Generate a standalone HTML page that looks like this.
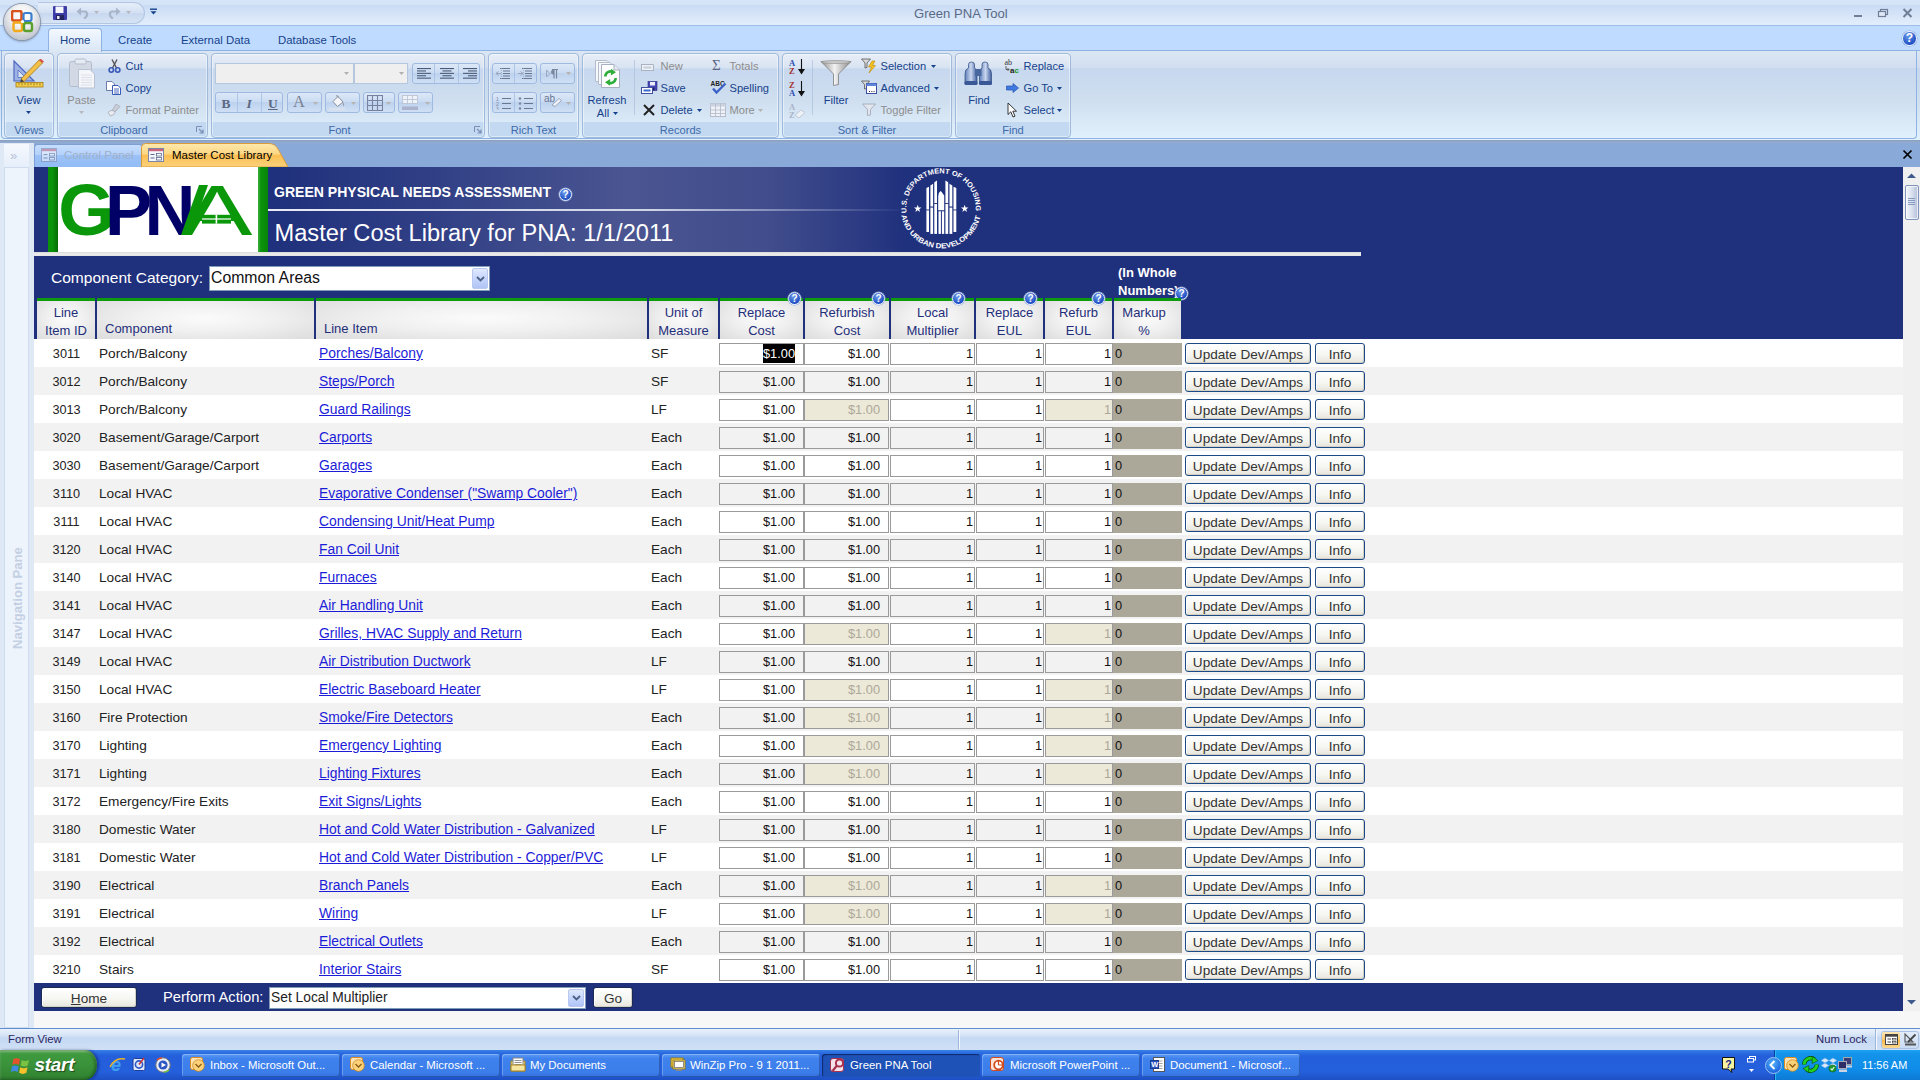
<!DOCTYPE html><html><head><meta charset="utf-8"><title>Green PNA Tool</title><style>*{box-sizing:border-box;margin:0;padding:0}
html,body{width:1920px;height:1080px;overflow:hidden;background:#fff}
body{position:relative;font-family:"Liberation Sans",sans-serif;font-size:11.3px;color:#15428b}
.a{position:absolute}
.t{position:absolute;white-space:nowrap;line-height:1}
#title{left:0;top:0;width:1920px;height:26px;background:linear-gradient(#d6e4f7 0,#d6e4f7 5px,#c9dbf5 5px,#e3eefb 25px,#9dbde8 25px,#9dbde8 26px)}
#tabrow{left:0;top:26px;width:1920px;height:25px;background:#bfdbff;border-bottom:1px solid #8db2e3}
#ribbon{left:0;top:51px;width:1920px;height:89px;background:linear-gradient(#dbe6f4 0,#d2deef 17px,#c7d7ee 17px,#cfdff0 50px,#e1f1fc 88px)}
.grp{position:absolute;top:53px;height:85px;border:1px solid #9fbadb;border-radius:4px;background:linear-gradient(rgba(255,255,255,.35) 0,rgba(255,255,255,.12) 15px,rgba(255,255,255,0) 15px,rgba(255,255,255,0) 68px,#c2d9f1 68px,#c2d9f1 83px);box-shadow:inset 0 0 0 1px rgba(255,255,255,.45)}
.gl{position:absolute;top:124.5px;font-size:11.1px;color:#3e6aaa;text-align:center;white-space:nowrap;line-height:1}
.rt{position:absolute;white-space:nowrap;line-height:1;font-size:11.1px;color:#15428b}
.dis{color:#8d8d8d}
.bg{position:absolute;border:1px solid #9ebae1;border-radius:3px;background:linear-gradient(#dce8f7,#c9dbf2 50%,#bdd2ee 50%,#cfe0f5)}
.sep{position:absolute;width:1px;background:#9ebae1;opacity:.7}
.combo{position:absolute;border:1px solid #b5c7de;background:#efefef}
#docbar{left:0;top:140px;width:1920px;height:27px;background:linear-gradient(#8a9fbf 0,#93aace 2px,#89aad8 4px,#89aad8 27px)}
#nav{left:0;top:143px;width:34px;height:885px;background:#dfe9f6}
#form{left:34px;top:167px;width:1869px;height:844px;background:#fff;overflow:hidden}
.navy{background:#1f307c}
.hc{position:absolute;top:131px;height:41px;border-top:3px solid #0e9a0e;background:radial-gradient(ellipse at 50% 45%,#fbfbfb 0,#f0f0f0 45%,#dcdcdc 100%);color:#1f2f7a;font-size:13px;line-height:18px;text-align:center;white-space:nowrap}
.hd{position:absolute;top:134px;height:38px;width:2px;background:#1f307c}
.row{position:absolute;left:0;width:1869px;height:28px;font-size:13.65px;color:#222;line-height:29px;white-space:nowrap}
.row.alt{background:#f2f2f2}
.row span,.row a{position:absolute;top:0;height:28px}
.row a{color:#1c1cd8;text-decoration:underline;font-size:13.85px}
.f{position:absolute;top:4px;height:22px;border:1px solid #9a9a9a;line-height:20px;text-align:right;font-size:12.8px;color:#111}
.f.d{background:#ece9d8;color:#aca899}
.mk{position:absolute;top:4px;height:22px;left:1079px;width:69px;background:#aca899;line-height:21px;padding-left:2px;font-size:12.8px;color:#111}
.btn{position:absolute;top:4px;height:21px;border:1px solid #1c4a86;border-radius:3px;background:linear-gradient(#fff,#f5f5f1 60%,#e6e4db);box-shadow:inset -1px -1px 0 #d2d0c4, inset 1px 1px 0 #fff;line-height:21px;text-align:center;font-size:13.6px;color:#333}
.q{position:absolute;width:13px;height:13px;border-radius:50%;background:radial-gradient(circle at 40% 30%,#6d9bea,#1f4fc4 70%);border:1px solid #e6eefc;box-shadow:0 0 0 .5px #8aa3d8;color:#fff;font-size:10px;font-weight:bold;line-height:11px;text-align:center}
#below{left:34px;top:1011px;width:1886px;height:17px;background:#f7f7f7}
#status{left:0;top:1028px;width:1920px;height:22px;background:linear-gradient(#5f8fd0 0,#5f8fd0 1px,#e9f1fb 1px,#d7e5f7 7px,#c5d9f3 10px,#cfe0f6 21px);font-size:11.3px}
#task{left:0;top:1050px;width:1920px;height:30px;background:linear-gradient(#3a81e8 0,#2a6ce0 3px,#245edb 6px,#2560dc 22px,#1d4fc4 30px);color:#fff;font-size:11.3px}
.tb{position:absolute;top:4px;height:23px;width:158px;border-radius:3px;background:linear-gradient(#5d9bf3,#3f82ee 20%,#3b7de9 80%,#3572dc);box-shadow:inset 1px 1px 0 rgba(255,255,255,.25),inset -1px -1px 0 rgba(0,0,40,.25);line-height:23px;white-space:nowrap;color:#fff;font-size:11.4px}
.tb.act{background:#1e52b7;box-shadow:inset 1px 1px 1px rgba(0,0,30,.5)}
.tb span{position:absolute;left:28px;top:0}
</style></head><body>
<div id="title" class="a"></div>
<div class="t" style="left:914px;top:7px;font-size:13.1px;color:#5a6a85">Green PNA Tool</div>
<div id="tabrow" class="a"></div>
<div id="ribbon" class="a"></div>
<div class="a" style="left:38px;top:2px;width:107px;height:22px;border:1px solid #b3c7e3;border-left:none;border-radius:0 11px 11px 0;background:linear-gradient(#e6eefa,#d3e0f3 50%,#c7d7ee 50%,#d7e4f5)"></div>
<div class="a" style="left:4px;top:4px;width:36px;height:36px;border-radius:50%;background:radial-gradient(circle at 50% 35%,#fff 0,#f3f3f3 35%,#d3d6dc 60%,#b9bec8 85%,#9aa3b3 100%);box-shadow:0 0 0 1px #8b96aa,0 1px 3px rgba(0,0,0,.45)"></div>
<svg class="a" style="left:11px;top:10px" width="23" height="23" viewBox="0 0 23 23"><rect x="1" y="1" width="9.5" height="9.5" rx="2" fill="none" stroke="#d9531e" stroke-width="2.6"/><rect x="12.5" y="3" width="8" height="8" rx="2" fill="none" stroke="#3b7fd0" stroke-width="2.2"/><rect x="2.5" y="12.5" width="8.5" height="8.5" rx="2" fill="none" stroke="#f2a91c" stroke-width="2.4"/><rect x="13" y="13" width="8" height="8" rx="2" fill="none" stroke="#5aa02c" stroke-width="2.4"/><circle cx="11.5" cy="11.5" r="1.6" fill="#fff"/></svg>
<svg class="a" style="left:53px;top:6px" width="14" height="14" viewBox="0 0 14 14"><rect x="0" y="0" width="14" height="14" rx="1" fill="#3c3ca8"/><rect x="2.5" y="0.5" width="8" height="6.5" fill="#f4f6fb"/><rect x="3" y="9" width="8" height="5" fill="#23235e"/><rect x="4" y="10" width="2.5" height="3" fill="#e8e8f0"/></svg>
<svg class="a" style="left:76px;top:6px" width="14" height="13" viewBox="0 0 14 13"><path d="M2 5.5 H8.5 Q11.5 5.5 11 9 Q10.6 11.5 8 12.5" fill="none" stroke="#a8b4c9" stroke-width="2.2"/><path d="M0.5 5.5 L5 1.5 V9.5Z" fill="#a8b4c9"/></svg>
<svg class="a" style="left:94px;top:11px" width="5" height="3" viewBox="0 0 5 3"><path d="M0 0H5L2.5 3Z" fill="#b4b8be"/></svg>
<svg class="a" style="left:107px;top:6px" width="14" height="13" viewBox="0 0 14 13"><path d="M12 5.5 H5.5 Q2.5 5.5 3 9 Q3.4 11.5 6 12.5" fill="none" stroke="#a8b4c9" stroke-width="2.2"/><path d="M13.5 5.5 L9 1.5 V9.5Z" fill="#a8b4c9"/></svg>
<svg class="a" style="left:126px;top:11px" width="5" height="3" viewBox="0 0 5 3"><path d="M0 0H5L2.5 3Z" fill="#b4b8be"/></svg>
<svg class="a" style="left:150px;top:8px" width="7" height="7" viewBox="0 0 7 7"><rect x="0" y="0.5" width="7" height="1.4" fill="#15428b"/><path d="M0.5 3.2H6.5L3.5 6.5Z" fill="#15428b"/></svg>
<svg class="a" style="left:1854px;top:8px" width="70" height="14" viewBox="0 0 70 14"><rect x="0" y="7" width="8" height="2" fill="#6f7d96"/><rect x="26.5" y="1.5" width="7" height="5" fill="none" stroke="#6f7d96" stroke-width="1.2"/><rect x="24.5" y="3.5" width="7" height="5" fill="#dfe8f6" stroke="#6f7d96" stroke-width="1.2"/><path d="M49.5 1 L57.5 9 M57.5 1 L49.5 9" stroke="#6f7d96" stroke-width="2"/></svg>
<div class="q" style="left:1902px;top:31px;width:15px;height:15px;font-size:12px;line-height:13px">?</div>
<div class="a" style="left:48px;top:28px;width:54px;height:24px;border:1px solid #8db2e3;border-bottom:none;border-radius:4px 4px 0 0;background:linear-gradient(#f3f8fe,#e3edfa 60%,#dbe6f4)"></div>
<div class="rt" style="left:60px;top:35px;font-size:11.4px">Home</div>
<div class="rt" style="left:118px;top:35px;font-size:11.4px">Create</div>
<div class="rt" style="left:181px;top:35px;font-size:11.4px">External Data</div>
<div class="rt" style="left:278px;top:35px;font-size:11.4px">Database Tools</div>
<div class="a" style="left:1px;top:51px;width:1916px;height:88px;border:1px solid #8db2e3;border-top:none;border-radius:0 0 4px 4px"></div>
<div class="grp" style="left:4px;width:50px"></div>
<div class="gl" style="left:4px;width:50px">Views</div>
<div class="grp" style="left:57px;width:151px"></div>
<div class="gl" style="left:57px;width:134px">Clipboard</div>
<div class="grp" style="left:211px;width:274px"></div>
<div class="gl" style="left:211px;width:257px">Font</div>
<div class="grp" style="left:488px;width:91px"></div>
<div class="gl" style="left:488px;width:91px">Rich Text</div>
<div class="grp" style="left:582px;width:197px"></div>
<div class="gl" style="left:582px;width:197px">Records</div>
<div class="grp" style="left:782px;width:170px"></div>
<div class="gl" style="left:782px;width:170px">Sort &amp; Filter</div>
<div class="grp" style="left:955px;width:116px"></div>
<div class="gl" style="left:955px;width:116px">Find</div>
<svg class="a" style="left:196px;top:126px" width="8" height="8" viewBox="0 0 8 8"><path d="M0.5 6V0.5H6" fill="none" stroke="#7a8fb5" stroke-width="1"/><path d="M3 3L7 7M7 3.5V7H3.5" fill="none" stroke="#7a8fb5" stroke-width="1.2"/></svg>
<svg class="a" style="left:474px;top:126px" width="8" height="8" viewBox="0 0 8 8"><path d="M0.5 6V0.5H6" fill="none" stroke="#7a8fb5" stroke-width="1"/><path d="M3 3L7 7M7 3.5V7H3.5" fill="none" stroke="#7a8fb5" stroke-width="1.2"/></svg>
<svg class="a" style="left:13px;top:59px" width="31" height="29" viewBox="0 0 31 29"><polygon points="1,2 1,22 21,22" fill="#9eb2e6" stroke="#4f68c0" stroke-width="1.2"/><polygon points="5,11 5,18.5 12.5,18.5" fill="#dbe6f4" stroke="#4f68c0" stroke-width="0.8"/><polygon points="8,20 26,1 29.5,4 11,22.5" fill="#f3c04a" stroke="#a67a14" stroke-width="0.8"/><polygon points="26,1 27.5,-0.5 31,2.5 29.5,4" fill="#d9534f"/><polygon points="8,20 11,22.5 7,23.5" fill="#444"/><rect x="3" y="23.5" width="27" height="4.5" fill="#f2cf4d" stroke="#a67a14" stroke-width="0.8"/><path d="M6 24V26M9 24V26.5M12 24V26M15 24V26.5M18 24V26M21 24V26.5M24 24V26M27 24V26.5" stroke="#8a6410" stroke-width="0.7"/></svg>
<div class="rt " style="left:-21.5px;width:100px;text-align:center;top:95px">View</div>
<svg class="a" style="left:26px;top:111px" width="5" height="3" viewBox="0 0 5 3"><path d="M0 0H5L2.5 3Z" fill="#15428b"/></svg>
<svg class="a" style="left:69px;top:58px" width="27" height="31" viewBox="0 0 27 31"><rect x="0.5" y="3.5" width="22" height="25" rx="2" fill="#d2d8e4" stroke="#b4bccb"/><rect x="6" y="1" width="11" height="5" rx="1.5" fill="#e6eaf2" stroke="#b4bccb"/><path d="M9.5 11.5H21L25.5 16V30H9.5Z" fill="#f4f6fa" stroke="#b9c2d3"/><path d="M12 17H23M12 19.5H23M12 22H23M12 24.5H23M12 27H23" stroke="#d5dae5" stroke-width="0.8"/></svg>
<div class="rt dis" style="left:31.5px;width:100px;text-align:center;top:95px">Paste</div>
<svg class="a" style="left:79px;top:111px" width="5" height="3" viewBox="0 0 5 3"><path d="M0 0H5L2.5 3Z" fill="#b4b8be"/></svg>
<svg class="a" style="left:108px;top:59px" width="13" height="14" viewBox="0 0 13 14"><path d="M4 0.5L8.5 9M9 0.5L4.5 9" stroke="#555" stroke-width="1.4"/><circle cx="3.3" cy="11" r="2.2" fill="none" stroke="#3759b8" stroke-width="1.6"/><circle cx="9.7" cy="11" r="2.2" fill="none" stroke="#3759b8" stroke-width="1.6"/></svg>
<div class="rt " style="left:125.5px;top:61px">Cut</div>
<svg class="a" style="left:106px;top:81px" width="16" height="14" viewBox="0 0 16 14"><path d="M0.5 0.5H6L8.5 3V9.5H0.5Z" fill="#fff" stroke="#6a7da8"/><path d="M6.5 4.5H12L14.5 7V13.5H6.5Z" fill="#fff" stroke="#3759b8"/><path d="M8 8H13M8 10H13M8 12H13" stroke="#3759b8" stroke-width="0.9"/></svg>
<div class="rt " style="left:125.5px;top:83px">Copy</div>
<svg class="a" style="left:107px;top:103px" width="15" height="14" viewBox="0 0 15 14"><path d="M9 1L13 3.5L8 9L5.5 7Z" fill="#c9cdd6" stroke="#a2a8b5" stroke-width="0.7"/><path d="M1 9.5Q4 6.5 6 7.5L8 9.5Q7 12.5 3.5 13Z" fill="#e9ebf0" stroke="#a2a8b5" stroke-width="0.8"/></svg>
<div class="rt dis" style="left:125.5px;top:105px">Format Painter</div>
<div class="combo" style="left:215px;top:63px;width:139px;height:21px"></div>
<div class="combo" style="left:354px;top:63px;width:54px;height:21px"></div>
<svg class="a" style="left:343.5px;top:72px" width="5" height="3" viewBox="0 0 5 3"><path d="M0 0H5L2.5 3Z" fill="#b0b0ae"/></svg>
<svg class="a" style="left:398.5px;top:72px" width="5" height="3" viewBox="0 0 5 3"><path d="M0 0H5L2.5 3Z" fill="#b0b0ae"/></svg>
<div class="bg" style="left:412px;top:63px;width:68px;height:21px"></div>
<svg class="a" style="left:416.5px;top:68px" width="14" height="12" viewBox="0 0 14 12"><rect x="0" y="0.0" width="14" height="1.1" fill="#4a5a78"/><rect x="0" y="2.4" width="9" height="1.1" fill="#4a5a78"/><rect x="0" y="4.8" width="14" height="1.1" fill="#4a5a78"/><rect x="0" y="7.199999999999999" width="9" height="1.1" fill="#4a5a78"/><rect x="0" y="9.6" width="14" height="1.1" fill="#4a5a78"/></svg>
<svg class="a" style="left:439.5px;top:68px" width="14" height="12" viewBox="0 0 14 12"><rect x="0.0" y="0.0" width="14" height="1.1" fill="#4a5a78"/><rect x="2.5" y="2.4" width="9" height="1.1" fill="#4a5a78"/><rect x="0.0" y="4.8" width="14" height="1.1" fill="#4a5a78"/><rect x="2.5" y="7.199999999999999" width="9" height="1.1" fill="#4a5a78"/><rect x="0.0" y="9.6" width="14" height="1.1" fill="#4a5a78"/></svg>
<svg class="a" style="left:462.5px;top:68px" width="14" height="12" viewBox="0 0 14 12"><rect x="0" y="0.0" width="14" height="1.1" fill="#4a5a78"/><rect x="5" y="2.4" width="9" height="1.1" fill="#4a5a78"/><rect x="0" y="4.8" width="14" height="1.1" fill="#4a5a78"/><rect x="5" y="7.199999999999999" width="9" height="1.1" fill="#4a5a78"/><rect x="0" y="9.6" width="14" height="1.1" fill="#4a5a78"/></svg>
<div class="sep" style="left:434px;top:64px;height:19px"></div><div class="sep" style="left:458px;top:64px;height:19px"></div>
<div class="bg" style="left:215px;top:92px;width:68px;height:21px"></div>
<div class="sep" style="left:237px;top:93px;height:19px"></div><div class="sep" style="left:261px;top:93px;height:19px"></div>
<div class="t" style="left:221.5px;top:96.5px;font-family:'Liberation Serif',serif;font-weight:bold;font-size:13.5px;color:#5d6883">B</div>
<div class="t" style="left:246.5px;top:96.5px;font-family:'Liberation Serif',serif;font-style:italic;font-weight:bold;font-size:13.5px;color:#5d6883">I</div>
<div class="t" style="left:268px;top:96.5px;font-family:'Liberation Serif',serif;font-weight:bold;font-size:13.5px;color:#5d6883;text-decoration:underline">U</div>
<div class="bg" style="left:287px;top:92px;width:35px;height:21px"></div>
<div class="bg" style="left:325px;top:92px;width:35px;height:21px"></div>
<div class="bg" style="left:363px;top:92px;width:32px;height:21px"></div>
<div class="bg" style="left:398px;top:92px;width:35px;height:21px"></div>
<div class="t" style="left:293px;top:93.5px;font-family:'Liberation Serif',serif;font-size:16.5px;color:#7a8192">A</div>
<svg class="a" style="left:313px;top:101.5px" width="5" height="3" viewBox="0 0 5 3"><path d="M0 0H5L2.5 3Z" fill="#b4b4b0"/></svg>
<svg class="a" style="left:329px;top:95px" width="17" height="16" viewBox="0 0 17 16"><path d="M4 6.5L9 1.5L14 7L8.5 11.5Z" fill="#f6f7fa" stroke="#8a8f9c" stroke-width="1"/><path d="M7 1Q8.5 -0.5 9.5 2.5" fill="none" stroke="#8a8f9c"/><path d="M14 7Q16 9.5 14.5 11.5Q13 9.5 14 7Z" fill="#9aa0ad"/><rect x="0" y="12.5" width="16" height="3" fill="#d9e1ef"/></svg>
<svg class="a" style="left:351px;top:101.5px" width="5" height="3" viewBox="0 0 5 3"><path d="M0 0H5L2.5 3Z" fill="#b4b4b0"/></svg>
<svg class="a" style="left:367px;top:95px" width="16" height="16" viewBox="0 0 16 16"><rect x="0.5" y="0.5" width="15" height="15" fill="none" stroke="#7882a0" stroke-width="1.1"/><path d="M5.5 0.5V15.5M10.5 0.5V15.5M0.5 5.5H15.5M0.5 10.5H15.5" stroke="#7882a0" stroke-width="1.1"/></svg>
<svg class="a" style="left:385.5px;top:101.5px" width="5" height="3" viewBox="0 0 5 3"><path d="M0 0H5L2.5 3Z" fill="#b4b4b0"/></svg>
<svg class="a" style="left:402px;top:95px" width="16" height="16" viewBox="0 0 16 16"><rect x="0.5" y="0.5" width="15" height="8" fill="#eef2f9" stroke="#b7bfd0" stroke-width="0.8"/><path d="M5.5 0.5V8.5M10.5 0.5V8.5M0.5 4.5H15.5" stroke="#b7bfd0" stroke-width="0.8"/><rect x="0" y="11.5" width="16" height="3.5" fill="#aab3cb"/></svg>
<svg class="a" style="left:424.5px;top:101.5px" width="5" height="3" viewBox="0 0 5 3"><path d="M0 0H5L2.5 3Z" fill="#b4b4b0"/></svg>
<div class="bg" style="left:492px;top:63px;width:45px;height:21px"></div>
<div class="bg" style="left:540px;top:63px;width:35px;height:21px"></div>
<div class="bg" style="left:492px;top:92px;width:45px;height:21px"></div>
<div class="bg" style="left:540px;top:92px;width:35px;height:21px"></div>
<div class="sep" style="left:514px;top:64px;height:19px"></div><div class="sep" style="left:514px;top:93px;height:19px"></div>
<svg class="a" style="left:496px;top:68px" width="15" height="12" viewBox="0 0 15 12"><path d="M4 0.5H14M7 3H14M7 5.5H14M7 8H14M4 10.5H14" stroke="#6b7791" stroke-width="1.1"/><path d="M0 5.5H5M0 5.5L2.5 3.5M0 5.5L2.5 7.5" stroke="#9aa5c2" stroke-width="1"/><path d="M5.5 0V12" stroke="#9aa5c2" stroke-width="0.8" stroke-dasharray="1 1"/></svg>
<svg class="a" style="left:518px;top:68px" width="15" height="12" viewBox="0 0 15 12"><path d="M4 0.5H14M7 3H14M7 5.5H14M7 8H14M4 10.5H14" stroke="#6b7791" stroke-width="1.1"/><path d="M0 5.5H5M5 5.5L2.5 3.5M5 5.5L2.5 7.5" stroke="#9aa5c2" stroke-width="1"/><path d="M5.5 0V12" stroke="#9aa5c2" stroke-width="0.8" stroke-dasharray="1 1"/></svg>
<svg class="a" style="left:546px;top:69px" width="13" height="10" viewBox="0 0 13 10"><path d="M0.5 1L4 4.5L0.5 8Z" fill="none" stroke="#9aa5c2"/><path d="M6 0.5H12M8 0.5V9.5M10.5 0.5V9.5" stroke="#7a859f" stroke-width="1.2"/><path d="M8 0.5Q5 0.5 5 3Q5 5.5 8 5.5Z" fill="#7a859f"/></svg>
<svg class="a" style="left:566px;top:72px" width="5" height="3" viewBox="0 0 5 3"><path d="M0 0H5L2.5 3Z" fill="#b4b4b0"/></svg>
<svg class="a" style="left:496px;top:97px" width="16" height="13" viewBox="0 0 16 13"><path d="M6 1.5H15M6 6.5H15M6 11.5H15" stroke="#6b7791" stroke-width="1.1"/><text x="0" y="4" font-size="5" fill="#7a859f" font-family="Liberation Sans,sans-serif">1</text><text x="0" y="9" font-size="5" fill="#7a859f" font-family="Liberation Sans,sans-serif">2</text><text x="0" y="13.5" font-size="5" fill="#7a859f" font-family="Liberation Sans,sans-serif">3</text></svg>
<svg class="a" style="left:518px;top:97px" width="16" height="13" viewBox="0 0 16 13"><path d="M6 1.5H15M6 6.5H15M6 11.5H15" stroke="#6b7791" stroke-width="1.1"/><circle cx="2" cy="1.5" r="1.2" fill="#7a859f"/><circle cx="2" cy="6.5" r="1.2" fill="#7a859f"/><circle cx="2" cy="11.5" r="1.2" fill="#7a859f"/></svg>
<div class="t" style="left:544px;top:93.5px;font-size:10px;color:#6b7791">ab</div>
<svg class="a" style="left:551px;top:97px" width="12" height="10" viewBox="0 0 12 10"><path d="M1 8L8 1.5L10.5 3.5L4 9.5Z" fill="#eef1f7" stroke="#8d97ae" stroke-width="0.8"/></svg>
<svg class="a" style="left:566px;top:101.5px" width="5" height="3" viewBox="0 0 5 3"><path d="M0 0H5L2.5 3Z" fill="#b4b4b0"/></svg>
<svg class="a" style="left:594px;top:59px" width="28" height="30" viewBox="0 0 28 30"><path d="M1.5 1.5H13L17 5.5V22.5H1.5Z" fill="#f6f8fb" stroke="#b4bccb"/><path d="M4.5 3.5H16L20 7.5V25.5H4.5Z" fill="#f6f8fb" stroke="#b4bccb"/><path d="M7.5 5.5H20L25.5 11V28.5H7.5Z" fill="#fff" stroke="#a7b0c2"/><path d="M20 5.5V11H25.5" fill="#e3e8f1" stroke="#a7b0c2"/><path d="M11.3 17.5A5.3 5.3 0 0 1 19 13" fill="none" stroke="#2fae3c" stroke-width="2.6"/><path d="M17 9.8L22 13.2L16.8 16.4Z" fill="#2fae3c"/><path d="M21.7 19A5.3 5.3 0 0 1 14 23.5" fill="none" stroke="#2fae3c" stroke-width="2.6"/><path d="M16 26.7L11 23.3L16.2 20.1Z" fill="#2fae3c"/></svg>
<div class="rt " style="left:557px;width:100px;text-align:center;top:95px">Refresh</div>
<div class="rt " style="left:553px;width:100px;text-align:center;top:108px">All</div>
<svg class="a" style="left:612.5px;top:112px" width="5" height="3" viewBox="0 0 5 3"><path d="M0 0H5L2.5 3Z" fill="#15428b"/></svg>
<div class="sep" style="left:634px;top:60px;height:55px;background:#a9bfdc"></div>
<svg class="a" style="left:641px;top:58px" width="17" height="14" viewBox="0 0 17 14"><rect x="0.5" y="6.5" width="12" height="6" fill="#eef1f6" stroke="#aab2c2"/><rect x="2.5" y="8.5" width="8" height="2" fill="#c7cedb"/><path d="M13 1V7M10 4H16M11 2L15 6M15 2L11 6" stroke="#dfe5ef" stroke-width="0.9"/></svg>
<div class="rt dis" style="left:660.5px;top:61px">New</div>
<svg class="a" style="left:641px;top:81px" width="17" height="14" viewBox="0 0 17 14"><rect x="7" y="0.5" width="9" height="9" fill="#4646b4" stroke="#2b2b80" stroke-width="0.6"/><rect x="9" y="1" width="5" height="3.5" fill="#eef"/><rect x="9.5" y="6.5" width="4" height="3" fill="#23235e"/><rect x="0.5" y="6.5" width="11" height="6" fill="#fff" stroke="#3d50a0"/><rect x="2.5" y="8.5" width="7" height="2" fill="#3d6bd0"/></svg>
<div class="rt " style="left:660.5px;top:83px">Save</div>
<svg class="a" style="left:643px;top:104px" width="12" height="12" viewBox="0 0 12 12"><path d="M1 1L11 11M11 1L1 11" stroke="#222" stroke-width="2"/></svg>
<div class="rt " style="left:660.5px;top:105px">Delete</div>
<svg class="a" style="left:697px;top:108.5px" width="5" height="3" viewBox="0 0 5 3"><path d="M0 0H5L2.5 3Z" fill="#15428b"/></svg>
<div class="t" style="left:712px;top:58px;font-size:15px;color:#5a6585;font-family:'Liberation Serif',serif">&Sigma;</div>
<div class="rt dis" style="left:729.5px;top:61px">Totals</div>
<svg class="a" style="left:710px;top:80px" width="18" height="15" viewBox="0 0 18 15"><text x="0.5" y="6" font-size="6.5" font-weight="bold" fill="#222" font-family="Liberation Sans,sans-serif">ABC</text><path d="M3 8.5L6.5 12.5L15.5 3.5" fill="none" stroke="#3d63c8" stroke-width="2.4"/></svg>
<div class="rt " style="left:729.5px;top:83px">Spelling</div>
<svg class="a" style="left:710px;top:103px" width="17" height="14" viewBox="0 0 17 14"><rect x="0.5" y="0.5" width="15" height="13" fill="#f0f2f7" stroke="#b4bccb"/><rect x="0.5" y="0.5" width="15" height="3" fill="#ccd3e0"/><path d="M0.5 7H15.5M0.5 10.5H15.5M5.5 0.5V13.5M10.5 0.5V13.5" stroke="#b4bccb" stroke-width="0.9"/></svg>
<div class="rt dis" style="left:729.5px;top:105px">More</div>
<svg class="a" style="left:758px;top:108.5px" width="5" height="3" viewBox="0 0 5 3"><path d="M0 0H5L2.5 3Z" fill="#b4b4b0"/></svg>
<svg class="a" style="left:789px;top:57.5px" width="17" height="17" viewBox="0 0 17 17"><text x="0" y="7.5" font-size="8.5" font-weight="bold" font-family="Liberation Serif,serif" fill="#2d4fb0">A</text><text x="0" y="16" font-size="8.5" font-weight="bold" font-family="Liberation Serif,serif" fill="#a33030">Z</text><path d="M12.5 1V14M12.5 15.5L10 11.5H15Z" stroke="#111" stroke-width="1.1" fill="#111"/></svg>
<svg class="a" style="left:789px;top:79.5px" width="17" height="17" viewBox="0 0 17 17"><text x="0" y="7.5" font-size="8.5" font-weight="bold" font-family="Liberation Serif,serif" fill="#a33030">Z</text><text x="0" y="16" font-size="8.5" font-weight="bold" font-family="Liberation Serif,serif" fill="#2d4fb0">A</text><path d="M12.5 1V14M12.5 15.5L10 11.5H15Z" stroke="#111" stroke-width="1.1" fill="#111"/></svg>
<svg class="a" style="left:789px;top:101.5px" width="17" height="17" viewBox="0 0 17 17"><text x="0" y="7.5" font-size="8.5" font-weight="bold" font-family="Liberation Serif,serif" fill="#a9b3c9">A</text><text x="0" y="16" font-size="8.5" font-weight="bold" font-family="Liberation Serif,serif" fill="#a9b3c9">Z</text><path d="M6 13L12 8L16 10.5L10 16Z" fill="#eef1f6" stroke="#b8c0d0" stroke-width="0.8"/></svg>
<div class="sep" style="left:812px;top:60px;height:55px;background:#a9bfdc"></div>
<svg class="a" style="left:820px;top:60px" width="32" height="27" viewBox="0 0 32 27"><defs><linearGradient id="fg" x1="0" x2="1"><stop offset="0" stop-color="#8d8d8d"/><stop offset=".45" stop-color="#f2f2f2"/><stop offset="1" stop-color="#8a8a8a"/></linearGradient></defs><path d="M1 1.5H31L18.5 14V24.5L13.5 25.5V14Z" fill="url(#fg)" stroke="#7d7d7d" stroke-width="0.8"/><ellipse cx="16" cy="2" rx="15" ry="1.5" fill="#c9c9c9" stroke="#8a8a8a" stroke-width="0.6"/></svg>
<div class="rt " style="left:786px;width:100px;text-align:center;top:95px">Filter</div>
<svg class="a" style="left:861px;top:58px" width="17" height="16" viewBox="0 0 17 16"><path d="M0.5 1H9.5L6 5V9.5L4 10V5Z" fill="#d8d8d8" stroke="#555" stroke-width="0.8"/><path d="M11 3L7.5 9H10.5L8 15L14.5 7.5H11.5L14 3Z" fill="#f7c21c" stroke="#b8860b" stroke-width="0.6"/></svg>
<div class="rt " style="left:880.5px;top:61px">Selection</div>
<svg class="a" style="left:931px;top:64.5px" width="5" height="3" viewBox="0 0 5 3"><path d="M0 0H5L2.5 3Z" fill="#15428b"/></svg>
<svg class="a" style="left:861px;top:80px" width="17" height="15" viewBox="0 0 17 15"><path d="M0.5 1H8.5L5.5 4.5V8.5L3.5 9V4.5Z" fill="#d8d8d8" stroke="#555" stroke-width="0.8"/><rect x="5.5" y="3.5" width="10" height="10" fill="#fff" stroke="#3d50a0"/><rect x="5.5" y="3.5" width="10" height="2.5" fill="#5f86de"/><path d="M8 11.5H9M10.3 11.5H11.3M12.6 11.5H13.6" stroke="#333" stroke-width="1"/></svg>
<div class="rt " style="left:880.5px;top:83px">Advanced</div>
<svg class="a" style="left:934px;top:86.5px" width="5" height="3" viewBox="0 0 5 3"><path d="M0 0H5L2.5 3Z" fill="#15428b"/></svg>
<svg class="a" style="left:862px;top:103px" width="15" height="13" viewBox="0 0 15 13"><path d="M0.5 1H13.5L8.5 6.5V12L5.5 12.5V6.5Z" fill="#e3e6ec" stroke="#9aa3b5" stroke-width="0.8"/></svg>
<div class="rt dis" style="left:880.5px;top:105px">Toggle Filter</div>
<svg class="a" style="left:964px;top:61px" width="29" height="25" viewBox="0 0 29 25"><defs><linearGradient id="bn" x1="0" x2="1"><stop offset="0" stop-color="#5f7fb8"/><stop offset=".5" stop-color="#c9d6ef"/><stop offset="1" stop-color="#3f5f9d"/></linearGradient></defs><path d="M1 13Q1 8 4.5 7V3.5Q4.5 1 7.5 1Q10.5 1 10.5 3.5V7Q13 8 13 12V23H1Z" fill="url(#bn)" stroke="#2f4a80" stroke-width="0.7"/><path d="M15.5 12Q15.5 8 18 7V3.5Q18 1 21 1Q24 1 24 3.5V7Q27.5 8 27.5 13V23H15.5Z" fill="url(#bn)" stroke="#2f4a80" stroke-width="0.7"/><rect x="11" y="8" width="6.5" height="7" fill="#49679f"/><rect x="0.5" y="20" width="13" height="4" rx="1.5" fill="#3a5896"/><rect x="15" y="20" width="13" height="4" rx="1.5" fill="#3a5896"/></svg>
<div class="rt " style="left:929px;width:100px;text-align:center;top:95px">Find</div>
<svg class="a" style="left:1004px;top:58px" width="18" height="16" viewBox="0 0 18 16"><text x="0.5" y="6.5" font-size="8" font-family="Liberation Serif,serif" fill="#333">ab</text><text x="6" y="14.5" font-size="8" font-weight="bold" font-family="Liberation Sans,sans-serif" fill="#222">a</text><text x="10.5" y="14.5" font-size="8" font-weight="bold" font-family="Liberation Sans,sans-serif" fill="#1b9a1b">c</text><path d="M2 8V11.5H5M5 11.5L3.5 10M5 11.5L3.5 13" fill="none" stroke="#555" stroke-width="0.9"/></svg>
<div class="rt " style="left:1023.5px;top:61px">Replace</div>
<svg class="a" style="left:1006px;top:83px" width="13" height="10" viewBox="0 0 13 10"><path d="M0.5 3H7V0.5L12.5 5L7 9.5V7H0.5Z" fill="#3f7ae0" stroke="#1f4fb0" stroke-width="0.7"/></svg>
<div class="rt " style="left:1023.5px;top:83px">Go To</div>
<svg class="a" style="left:1057px;top:86.5px" width="5" height="3" viewBox="0 0 5 3"><path d="M0 0H5L2.5 3Z" fill="#15428b"/></svg>
<svg class="a" style="left:1007px;top:102px" width="10" height="16" viewBox="0 0 10 16"><path d="M1 1V12.5L3.8 9.8L6 15L8 14.2L5.8 9.2H9.5Z" fill="#fff" stroke="#222" stroke-width="0.9"/></svg>
<div class="rt " style="left:1023.5px;top:105px">Select</div>
<svg class="a" style="left:1057px;top:108.5px" width="5" height="3" viewBox="0 0 5 3"><path d="M0 0H5L2.5 3Z" fill="#15428b"/></svg>
<div id="docbar" class="a"></div>
<div id="nav" class="a"></div>
<div class="a" style="left:4px;top:144px;width:25px;height:884px;background:#eef4fc;border:1px solid #cfdcef;border-top:none"></div>
<div class="a" style="left:4px;top:144px;width:25px;height:24px;background:linear-gradient(#f5f9fe,#e6eefa);border-bottom:1px solid #cfdcef"></div>
<div class="t" style="left:10px;top:149px;font-size:13px;color:#b7c2d6;letter-spacing:-1px">&raquo;</div>
<div class="t" style="left:11px;top:649px;width:110px;height:14px;font-size:13.1px;font-weight:bold;color:#c3cfe3;transform-origin:0 0;transform:rotate(-90deg)">Navigation Pane</div>
<div class="a" style="left:34px;top:143.5px;width:118px;height:23.5px;background:linear-gradient(#c6defd,#b3d1fb 45%,#9cc2f7 46%,#93bcf5);border:1px solid #7d9fd3;border-bottom:none;border-radius:4px 14px 0 0/4px 24px 0 0"></div>
<svg class="a" style="left:41px;top:148px;opacity:0.55" width="16" height="14" viewBox="0 0 16 14"><rect x="0.5" y="0.5" width="15" height="13" fill="#f4f6fb" stroke="#7b87a8"/><rect x="1" y="1" width="14" height="2.2" fill="#c9637e"/><path d="M2.5 6.5H6.5M2.5 10H6.5" stroke="#5c6a8e" stroke-width="1"/><rect x="8.5" y="5.5" width="5" height="2.5" fill="#fff" stroke="#5c6a8e" stroke-width="0.8"/><rect x="8.5" y="9.5" width="5" height="2.5" fill="#fff" stroke="#5c6a8e" stroke-width="0.8"/></svg>
<div class="t" style="left:64px;top:150px;font-size:11.5px;color:#9fb0c9">Control Panel</div>
<svg class="a" style="left:141px;top:143px" width="150" height="24" viewBox="0 0 150 24"><defs><linearGradient id="tg" x1="0" y1="0" x2="0" y2="1"><stop offset="0" stop-color="#fde9ad"/><stop offset=".45" stop-color="#fdd682"/><stop offset=".5" stop-color="#fbbf52"/><stop offset="1" stop-color="#fcd27c"/></linearGradient></defs><path d="M0.5 24V4.5Q0.5 0.5 4.5 0.5H128Q134 0.5 137 6L147 24Z" fill="url(#tg)" stroke="#d99a3a" stroke-width="1"/></svg>
<svg class="a" style="left:148px;top:148px;opacity:1" width="16" height="14" viewBox="0 0 16 14"><rect x="0.5" y="0.5" width="15" height="13" fill="#f4f6fb" stroke="#7b87a8"/><rect x="1" y="1" width="14" height="2.2" fill="#c9637e"/><path d="M2.5 6.5H6.5M2.5 10H6.5" stroke="#5c6a8e" stroke-width="1"/><rect x="8.5" y="5.5" width="5" height="2.5" fill="#fff" stroke="#5c6a8e" stroke-width="0.8"/><rect x="8.5" y="9.5" width="5" height="2.5" fill="#fff" stroke="#5c6a8e" stroke-width="0.8"/></svg>
<div class="t" style="left:172px;top:150px;font-size:11.5px;color:#000">Master Cost Library</div>
<svg class="a" style="left:1902px;top:149px" width="11" height="11" viewBox="0 0 11 11"><path d="M1.5 1.5L9.5 9.5M9.5 1.5L1.5 9.5" stroke="#000" stroke-width="1.7"/></svg>
<div id="form" class="a">
<div class="a navy" style="left:0;top:0;width:1869px;height:85px"></div>
<div class="a" style="left:234px;top:0;width:640px;height:85px;background:linear-gradient(90deg,#1f307c 0,#303f85 25%,#4a5591 56%,#414d8c 78%,#2c3b83 92%,#1f307c 100%)"></div>
<div class="a" style="left:234px;top:42px;width:640px;height:2px;background:linear-gradient(90deg,#e8ebf5 0,#cfd4e6 60%,rgba(150,160,200,.5) 85%,rgba(31,48,124,0) 100%)"></div>
<div class="a" style="left:14px;top:0;width:10px;height:85px;background:linear-gradient(90deg,#0a930a 0,#0a930a 45%,#066c06 100%)"></div>
<div class="a" style="left:24px;top:0;width:200px;height:85px;background:#fff"></div>
<div class="a" style="left:224px;top:0;width:10px;height:85px;background:linear-gradient(90deg,#3fae3f 0,#0a930a 30%,#078407 100%)"></div>
<svg class="a" style="left:24px;top:0" width="200" height="85" viewBox="58 167 200 85"><text x="58.2" y="235" font-family="Liberation Sans, sans-serif" font-weight="bold" font-size="72.5" fill="#0a980a">G</text><text x="105" y="235" font-family="Liberation Sans, sans-serif" font-weight="bold" font-size="70.5" fill="#000066">P</text><text x="144.6" y="235" font-family="Liberation Sans, sans-serif" font-weight="bold" font-size="70.5" fill="#000066">N</text><g transform="translate(181.5 235) scale(1.53 1)"><text x="0" y="0" font-family="Liberation Sans, sans-serif" font-size="69.5" fill="#0a980a">A</text></g><polygon points="181,235 190.5,235 208,185 199,185" fill="#0a980a"/><rect x="202" y="214.8" width="29" height="8.8" fill="#0a980a"/><rect x="202" y="218.4" width="29" height="1.2" fill="#fff"/><rect x="215.6" y="214.8" width="1.6" height="8.8" fill="#fff"/></svg>
<div class="t" style="left:240px;top:18px;font-size:14.05px;font-weight:bold;color:#fff">GREEN PHYSICAL NEEDS ASSESSMENT</div>
<div class="q" style="left:525px;top:21px">?</div>
<div class="t" style="left:240.5px;top:55px;font-size:23.65px;color:#fff">Master Cost Library for PNA: 1/1/2011</div>
<svg class="a" style="left:860.6px;top:-4.799999999999997px" width="92" height="92" viewBox="-46 -46 92 92"><defs><path id="arcT" d="M -34.36 4.83 A 34.7 34.7 0 1 1 34.51 3.63"/><path id="arcB" d="M -39.63 7.34 A 40.3 40.3 0 0 0 39.63 7.34"/></defs><text font-family="Liberation Sans, sans-serif" font-size="7.2" font-weight="bold" fill="#fff" textLength="116.5" lengthAdjust="spacingAndGlyphs"><textPath href="#arcT" startOffset="0" textLength="116.5" lengthAdjust="spacingAndGlyphs">U.S. DEPARTMENT OF HOUSING</textPath></text><text font-family="Liberation Sans, sans-serif" font-size="7.2" font-weight="bold" fill="#fff" textLength="110.8" lengthAdjust="spacingAndGlyphs"><textPath href="#arcB" startOffset="0" textLength="110.8" lengthAdjust="spacingAndGlyphs">AND URBAN DEVELOPMENT</textPath></text><polygon points="-14.6,-19.9 -12.0,-21.3 -12.0,1.4 -14.6,1.4" fill="#fff"/><rect x="-14.6" y="2.4" width="2.60" height="21.60" fill="#fff"/><polygon points="-10.6,-22.6 -7.9,-24.2 -7.9,-1.4 -10.6,-1.4" fill="#fff"/><rect x="-10.6" y="-0.4" width="2.70" height="26.30" fill="#fff"/><polygon points="-6.7,-25.8 -4.0,-27.4 -4.0,-5.1 -6.7,-5.1" fill="#fff"/><rect x="-6.7" y="-4.1" width="2.70" height="30.00" fill="#fff"/><polygon points="4.4,-27.4 7.2,-25.8 7.2,-5.1 4.4,-5.1" fill="#fff"/><rect x="4.4" y="-4.1" width="2.80" height="30.00" fill="#fff"/><polygon points="8.5,-24.2 11.3,-22.6 11.3,-1.4 8.5,-1.4" fill="#fff"/><rect x="8.5" y="-0.4" width="2.80" height="26.30" fill="#fff"/><polygon points="12.5,-21.3 15.3,-19.9 15.3,1.4 12.5,1.4" fill="#fff"/><rect x="12.5" y="2.4" width="2.80" height="21.60" fill="#fff"/><rect x="-2.5" y="3.3" width="2.4" height="22.6" fill="#fff"/><rect x="0.9" y="3.3" width="2.3" height="22.6" fill="#fff"/><path d="M-2.8 2.3 L-2.8 -11.5 Q-2.9 -15.5 -0.6 -17.1 Q0.6 -16.6 1.2 -15.2 L3.2 -12.6 L3.2 2.3 Z" fill="#fff"/><polygon points="-23.30,-3.30 -22.36,-0.59 -19.50,-0.54 -21.78,1.19 -20.95,3.94 -23.30,2.30 -25.65,3.94 -24.82,1.19 -27.10,-0.54 -24.24,-0.59" fill="#fff"/><polygon points="23.70,-3.30 24.64,-0.59 27.50,-0.54 25.22,1.19 26.05,3.94 23.70,2.30 21.35,3.94 22.18,1.19 19.90,-0.54 22.76,-0.59" fill="#fff"/></svg>
<div class="a" style="left:0;top:85px;width:1327px;height:4px;background:linear-gradient(#d8d8d8,#ededed 50%,#e2e2e2)"></div>
<div class="a navy" style="left:1327px;top:85px;width:542px;height:4px"></div>
<div class="a navy" style="left:0;top:89px;width:1869px;height:83px"></div>
<div class="t" style="left:17px;top:103px;font-size:15.55px;color:#fff">Component Category:</div>
<div class="a" style="left:175px;top:99px;width:281px;height:25px;background:#fff;border:1px solid #7f9db9"></div>
<div class="t" style="left:177px;top:103px;font-size:15.8px;color:#111">Common Areas</div>
<div class="a" style="left:438px;top:101px;width:16px;height:21px;border:1px solid #b7c9f2;border-radius:2px;background:linear-gradient(#dfe8fd,#c1d2fb 60%,#b0c4f5)"><svg class="a" style="left:2.5px;top:6.5px" width="9" height="6" viewBox="0 0 9 6"><path d="M1 1 L4.5 4.5 L8 1" fill="none" stroke="#4d6185" stroke-width="1.8"/></svg></div>
<div class="t" style="left:1084px;top:96.5px;font-size:13px;font-weight:bold;color:#fff;line-height:18px">(In Whole<br>Numbers)</div>
<div class="q" style="left:1141px;top:120px">?</div>
<div class="hc" style="left:3px;width:58px;padding-top:3px">Line<br>Item ID</div>
<div class="hc" style="left:63px;width:217px;text-align:left;padding:19px 0 0 8px">Component</div>
<div class="hc" style="left:282px;width:331px;text-align:left;padding:19px 0 0 8px">Line Item</div>
<div class="hc" style="left:615px;width:69px;padding-top:3px">Unit of<br>Measure</div>
<div class="hc" style="left:686px;width:83px;padding-top:3px">Replace<br>Cost</div>
<div class="hc" style="left:771px;width:84px;padding-top:3px">Refurbish<br>Cost</div>
<div class="hc" style="left:857px;width:83px;padding-top:3px">Local<br>Multiplier</div>
<div class="hc" style="left:942px;width:67px;padding-top:3px">Replace<br>EUL</div>
<div class="hc" style="left:1011px;width:67px;padding-top:3px">Refurb<br>EUL</div>
<div class="hc" style="left:1080px;width:67px;padding-top:3px;padding-right:7px">Markup<br>%</div>
<div class="hd" style="left:61px"></div>
<div class="hd" style="left:280px"></div>
<div class="hd" style="left:613px"></div>
<div class="hd" style="left:684px"></div>
<div class="hd" style="left:769px"></div>
<div class="hd" style="left:855px"></div>
<div class="hd" style="left:940px"></div>
<div class="hd" style="left:1009px"></div>
<div class="hd" style="left:1078px"></div>
<div class="q" style="left:754px;top:125px">?</div>
<div class="q" style="left:838px;top:125px">?</div>
<div class="q" style="left:918px;top:125px">?</div>
<div class="q" style="left:990px;top:125px">?</div>
<div class="q" style="left:1058px;top:125px">?</div>
<div class="row" style="top:172px"><span style="left:3px;top:1px;width:59px;text-align:center;font-size:12.7px">3011</span><span style="left:65px">Porch/Balcony</span><a style="left:285px">Porches/Balcony</a><span style="left:617px">SF</span><div class="f" style="left:685px;width:85px;padding-right:8px"><b style="font-weight:normal;background:#000;color:#fff;display:inline-block;height:19px;line-height:19px;padding:0 0 0 0">$1.00</b></div><div class="f" style="left:770px;width:85px;padding-right:8px">$1.00</div><div class="f" style="left:856px;width:85px;padding-right:1px">1</div><div class="f" style="left:942px;width:68px;padding-right:1px">1</div><div class="f" style="left:1011px;width:68px;padding-right:1px">1</div><div class="mk">0</div><div class="btn" style="left:1151px;width:126px">Update Dev/Amps</div><div class="btn" style="left:1281px;width:50px">Info</div></div>
<div class="row alt" style="top:200px"><span style="left:3px;top:1px;width:59px;text-align:center;font-size:12.7px">3012</span><span style="left:65px">Porch/Balcony</span><a style="left:285px">Steps/Porch</a><span style="left:617px">SF</span><div class="f" style="left:685px;width:85px;padding-right:8px">$1.00</div><div class="f" style="left:770px;width:85px;padding-right:8px">$1.00</div><div class="f" style="left:856px;width:85px;padding-right:1px">1</div><div class="f" style="left:942px;width:68px;padding-right:1px">1</div><div class="f" style="left:1011px;width:68px;padding-right:1px">1</div><div class="mk">0</div><div class="btn" style="left:1151px;width:126px">Update Dev/Amps</div><div class="btn" style="left:1281px;width:50px">Info</div></div>
<div class="row" style="top:228px"><span style="left:3px;top:1px;width:59px;text-align:center;font-size:12.7px">3013</span><span style="left:65px">Porch/Balcony</span><a style="left:285px">Guard Railings</a><span style="left:617px">LF</span><div class="f" style="left:685px;width:85px;padding-right:8px">$1.00</div><div class="f d" style="left:770px;width:85px;padding-right:8px">$1.00</div><div class="f" style="left:856px;width:85px;padding-right:1px">1</div><div class="f" style="left:942px;width:68px;padding-right:1px">1</div><div class="f d" style="left:1011px;width:68px;padding-right:1px">1</div><div class="mk">0</div><div class="btn" style="left:1151px;width:126px">Update Dev/Amps</div><div class="btn" style="left:1281px;width:50px">Info</div></div>
<div class="row alt" style="top:256px"><span style="left:3px;top:1px;width:59px;text-align:center;font-size:12.7px">3020</span><span style="left:65px">Basement/Garage/Carport</span><a style="left:285px">Carports</a><span style="left:617px">Each</span><div class="f" style="left:685px;width:85px;padding-right:8px">$1.00</div><div class="f" style="left:770px;width:85px;padding-right:8px">$1.00</div><div class="f" style="left:856px;width:85px;padding-right:1px">1</div><div class="f" style="left:942px;width:68px;padding-right:1px">1</div><div class="f" style="left:1011px;width:68px;padding-right:1px">1</div><div class="mk">0</div><div class="btn" style="left:1151px;width:126px">Update Dev/Amps</div><div class="btn" style="left:1281px;width:50px">Info</div></div>
<div class="row" style="top:284px"><span style="left:3px;top:1px;width:59px;text-align:center;font-size:12.7px">3030</span><span style="left:65px">Basement/Garage/Carport</span><a style="left:285px">Garages</a><span style="left:617px">Each</span><div class="f" style="left:685px;width:85px;padding-right:8px">$1.00</div><div class="f" style="left:770px;width:85px;padding-right:8px">$1.00</div><div class="f" style="left:856px;width:85px;padding-right:1px">1</div><div class="f" style="left:942px;width:68px;padding-right:1px">1</div><div class="f" style="left:1011px;width:68px;padding-right:1px">1</div><div class="mk">0</div><div class="btn" style="left:1151px;width:126px">Update Dev/Amps</div><div class="btn" style="left:1281px;width:50px">Info</div></div>
<div class="row alt" style="top:312px"><span style="left:3px;top:1px;width:59px;text-align:center;font-size:12.7px">3110</span><span style="left:65px">Local HVAC</span><a style="left:285px">Evaporative Condenser (&quot;Swamp Cooler&quot;)</a><span style="left:617px">Each</span><div class="f" style="left:685px;width:85px;padding-right:8px">$1.00</div><div class="f" style="left:770px;width:85px;padding-right:8px">$1.00</div><div class="f" style="left:856px;width:85px;padding-right:1px">1</div><div class="f" style="left:942px;width:68px;padding-right:1px">1</div><div class="f" style="left:1011px;width:68px;padding-right:1px">1</div><div class="mk">0</div><div class="btn" style="left:1151px;width:126px">Update Dev/Amps</div><div class="btn" style="left:1281px;width:50px">Info</div></div>
<div class="row" style="top:340px"><span style="left:3px;top:1px;width:59px;text-align:center;font-size:12.7px">3111</span><span style="left:65px">Local HVAC</span><a style="left:285px">Condensing Unit/Heat Pump</a><span style="left:617px">Each</span><div class="f" style="left:685px;width:85px;padding-right:8px">$1.00</div><div class="f" style="left:770px;width:85px;padding-right:8px">$1.00</div><div class="f" style="left:856px;width:85px;padding-right:1px">1</div><div class="f" style="left:942px;width:68px;padding-right:1px">1</div><div class="f" style="left:1011px;width:68px;padding-right:1px">1</div><div class="mk">0</div><div class="btn" style="left:1151px;width:126px">Update Dev/Amps</div><div class="btn" style="left:1281px;width:50px">Info</div></div>
<div class="row alt" style="top:368px"><span style="left:3px;top:1px;width:59px;text-align:center;font-size:12.7px">3120</span><span style="left:65px">Local HVAC</span><a style="left:285px">Fan Coil Unit</a><span style="left:617px">Each</span><div class="f" style="left:685px;width:85px;padding-right:8px">$1.00</div><div class="f" style="left:770px;width:85px;padding-right:8px">$1.00</div><div class="f" style="left:856px;width:85px;padding-right:1px">1</div><div class="f" style="left:942px;width:68px;padding-right:1px">1</div><div class="f" style="left:1011px;width:68px;padding-right:1px">1</div><div class="mk">0</div><div class="btn" style="left:1151px;width:126px">Update Dev/Amps</div><div class="btn" style="left:1281px;width:50px">Info</div></div>
<div class="row" style="top:396px"><span style="left:3px;top:1px;width:59px;text-align:center;font-size:12.7px">3140</span><span style="left:65px">Local HVAC</span><a style="left:285px">Furnaces</a><span style="left:617px">Each</span><div class="f" style="left:685px;width:85px;padding-right:8px">$1.00</div><div class="f" style="left:770px;width:85px;padding-right:8px">$1.00</div><div class="f" style="left:856px;width:85px;padding-right:1px">1</div><div class="f" style="left:942px;width:68px;padding-right:1px">1</div><div class="f" style="left:1011px;width:68px;padding-right:1px">1</div><div class="mk">0</div><div class="btn" style="left:1151px;width:126px">Update Dev/Amps</div><div class="btn" style="left:1281px;width:50px">Info</div></div>
<div class="row alt" style="top:424px"><span style="left:3px;top:1px;width:59px;text-align:center;font-size:12.7px">3141</span><span style="left:65px">Local HVAC</span><a style="left:285px">Air Handling Unit</a><span style="left:617px">Each</span><div class="f" style="left:685px;width:85px;padding-right:8px">$1.00</div><div class="f" style="left:770px;width:85px;padding-right:8px">$1.00</div><div class="f" style="left:856px;width:85px;padding-right:1px">1</div><div class="f" style="left:942px;width:68px;padding-right:1px">1</div><div class="f" style="left:1011px;width:68px;padding-right:1px">1</div><div class="mk">0</div><div class="btn" style="left:1151px;width:126px">Update Dev/Amps</div><div class="btn" style="left:1281px;width:50px">Info</div></div>
<div class="row" style="top:452px"><span style="left:3px;top:1px;width:59px;text-align:center;font-size:12.7px">3147</span><span style="left:65px">Local HVAC</span><a style="left:285px">Grilles, HVAC Supply and Return</a><span style="left:617px">Each</span><div class="f" style="left:685px;width:85px;padding-right:8px">$1.00</div><div class="f d" style="left:770px;width:85px;padding-right:8px">$1.00</div><div class="f" style="left:856px;width:85px;padding-right:1px">1</div><div class="f" style="left:942px;width:68px;padding-right:1px">1</div><div class="f d" style="left:1011px;width:68px;padding-right:1px">1</div><div class="mk">0</div><div class="btn" style="left:1151px;width:126px">Update Dev/Amps</div><div class="btn" style="left:1281px;width:50px">Info</div></div>
<div class="row alt" style="top:480px"><span style="left:3px;top:1px;width:59px;text-align:center;font-size:12.7px">3149</span><span style="left:65px">Local HVAC</span><a style="left:285px">Air Distribution Ductwork</a><span style="left:617px">LF</span><div class="f" style="left:685px;width:85px;padding-right:8px">$1.00</div><div class="f" style="left:770px;width:85px;padding-right:8px">$1.00</div><div class="f" style="left:856px;width:85px;padding-right:1px">1</div><div class="f" style="left:942px;width:68px;padding-right:1px">1</div><div class="f" style="left:1011px;width:68px;padding-right:1px">1</div><div class="mk">0</div><div class="btn" style="left:1151px;width:126px">Update Dev/Amps</div><div class="btn" style="left:1281px;width:50px">Info</div></div>
<div class="row" style="top:508px"><span style="left:3px;top:1px;width:59px;text-align:center;font-size:12.7px">3150</span><span style="left:65px">Local HVAC</span><a style="left:285px">Electric Baseboard Heater</a><span style="left:617px">LF</span><div class="f" style="left:685px;width:85px;padding-right:8px">$1.00</div><div class="f d" style="left:770px;width:85px;padding-right:8px">$1.00</div><div class="f" style="left:856px;width:85px;padding-right:1px">1</div><div class="f" style="left:942px;width:68px;padding-right:1px">1</div><div class="f d" style="left:1011px;width:68px;padding-right:1px">1</div><div class="mk">0</div><div class="btn" style="left:1151px;width:126px">Update Dev/Amps</div><div class="btn" style="left:1281px;width:50px">Info</div></div>
<div class="row alt" style="top:536px"><span style="left:3px;top:1px;width:59px;text-align:center;font-size:12.7px">3160</span><span style="left:65px">Fire Protection</span><a style="left:285px">Smoke/Fire Detectors</a><span style="left:617px">Each</span><div class="f" style="left:685px;width:85px;padding-right:8px">$1.00</div><div class="f d" style="left:770px;width:85px;padding-right:8px">$1.00</div><div class="f" style="left:856px;width:85px;padding-right:1px">1</div><div class="f" style="left:942px;width:68px;padding-right:1px">1</div><div class="f d" style="left:1011px;width:68px;padding-right:1px">1</div><div class="mk">0</div><div class="btn" style="left:1151px;width:126px">Update Dev/Amps</div><div class="btn" style="left:1281px;width:50px">Info</div></div>
<div class="row" style="top:564px"><span style="left:3px;top:1px;width:59px;text-align:center;font-size:12.7px">3170</span><span style="left:65px">Lighting</span><a style="left:285px">Emergency Lighting</a><span style="left:617px">Each</span><div class="f" style="left:685px;width:85px;padding-right:8px">$1.00</div><div class="f d" style="left:770px;width:85px;padding-right:8px">$1.00</div><div class="f" style="left:856px;width:85px;padding-right:1px">1</div><div class="f" style="left:942px;width:68px;padding-right:1px">1</div><div class="f d" style="left:1011px;width:68px;padding-right:1px">1</div><div class="mk">0</div><div class="btn" style="left:1151px;width:126px">Update Dev/Amps</div><div class="btn" style="left:1281px;width:50px">Info</div></div>
<div class="row alt" style="top:592px"><span style="left:3px;top:1px;width:59px;text-align:center;font-size:12.7px">3171</span><span style="left:65px">Lighting</span><a style="left:285px">Lighting Fixtures</a><span style="left:617px">Each</span><div class="f" style="left:685px;width:85px;padding-right:8px">$1.00</div><div class="f d" style="left:770px;width:85px;padding-right:8px">$1.00</div><div class="f" style="left:856px;width:85px;padding-right:1px">1</div><div class="f" style="left:942px;width:68px;padding-right:1px">1</div><div class="f d" style="left:1011px;width:68px;padding-right:1px">1</div><div class="mk">0</div><div class="btn" style="left:1151px;width:126px">Update Dev/Amps</div><div class="btn" style="left:1281px;width:50px">Info</div></div>
<div class="row" style="top:620px"><span style="left:3px;top:1px;width:59px;text-align:center;font-size:12.7px">3172</span><span style="left:65px">Emergency/Fire Exits</span><a style="left:285px">Exit Signs/Lights</a><span style="left:617px">Each</span><div class="f" style="left:685px;width:85px;padding-right:8px">$1.00</div><div class="f" style="left:770px;width:85px;padding-right:8px">$1.00</div><div class="f" style="left:856px;width:85px;padding-right:1px">1</div><div class="f" style="left:942px;width:68px;padding-right:1px">1</div><div class="f" style="left:1011px;width:68px;padding-right:1px">1</div><div class="mk">0</div><div class="btn" style="left:1151px;width:126px">Update Dev/Amps</div><div class="btn" style="left:1281px;width:50px">Info</div></div>
<div class="row alt" style="top:648px"><span style="left:3px;top:1px;width:59px;text-align:center;font-size:12.7px">3180</span><span style="left:65px">Domestic Water</span><a style="left:285px">Hot and Cold Water Distribution - Galvanized</a><span style="left:617px">LF</span><div class="f" style="left:685px;width:85px;padding-right:8px">$1.00</div><div class="f" style="left:770px;width:85px;padding-right:8px">$1.00</div><div class="f" style="left:856px;width:85px;padding-right:1px">1</div><div class="f" style="left:942px;width:68px;padding-right:1px">1</div><div class="f" style="left:1011px;width:68px;padding-right:1px">1</div><div class="mk">0</div><div class="btn" style="left:1151px;width:126px">Update Dev/Amps</div><div class="btn" style="left:1281px;width:50px">Info</div></div>
<div class="row" style="top:676px"><span style="left:3px;top:1px;width:59px;text-align:center;font-size:12.7px">3181</span><span style="left:65px">Domestic Water</span><a style="left:285px">Hot and Cold Water Distribution - Copper/PVC</a><span style="left:617px">LF</span><div class="f" style="left:685px;width:85px;padding-right:8px">$1.00</div><div class="f" style="left:770px;width:85px;padding-right:8px">$1.00</div><div class="f" style="left:856px;width:85px;padding-right:1px">1</div><div class="f" style="left:942px;width:68px;padding-right:1px">1</div><div class="f" style="left:1011px;width:68px;padding-right:1px">1</div><div class="mk">0</div><div class="btn" style="left:1151px;width:126px">Update Dev/Amps</div><div class="btn" style="left:1281px;width:50px">Info</div></div>
<div class="row alt" style="top:704px"><span style="left:3px;top:1px;width:59px;text-align:center;font-size:12.7px">3190</span><span style="left:65px">Electrical</span><a style="left:285px">Branch Panels</a><span style="left:617px">Each</span><div class="f" style="left:685px;width:85px;padding-right:8px">$1.00</div><div class="f d" style="left:770px;width:85px;padding-right:8px">$1.00</div><div class="f" style="left:856px;width:85px;padding-right:1px">1</div><div class="f" style="left:942px;width:68px;padding-right:1px">1</div><div class="f d" style="left:1011px;width:68px;padding-right:1px">1</div><div class="mk">0</div><div class="btn" style="left:1151px;width:126px">Update Dev/Amps</div><div class="btn" style="left:1281px;width:50px">Info</div></div>
<div class="row" style="top:732px"><span style="left:3px;top:1px;width:59px;text-align:center;font-size:12.7px">3191</span><span style="left:65px">Electrical</span><a style="left:285px">Wiring</a><span style="left:617px">LF</span><div class="f" style="left:685px;width:85px;padding-right:8px">$1.00</div><div class="f d" style="left:770px;width:85px;padding-right:8px">$1.00</div><div class="f" style="left:856px;width:85px;padding-right:1px">1</div><div class="f" style="left:942px;width:68px;padding-right:1px">1</div><div class="f d" style="left:1011px;width:68px;padding-right:1px">1</div><div class="mk">0</div><div class="btn" style="left:1151px;width:126px">Update Dev/Amps</div><div class="btn" style="left:1281px;width:50px">Info</div></div>
<div class="row alt" style="top:760px"><span style="left:3px;top:1px;width:59px;text-align:center;font-size:12.7px">3192</span><span style="left:65px">Electrical</span><a style="left:285px">Electrical Outlets</a><span style="left:617px">Each</span><div class="f" style="left:685px;width:85px;padding-right:8px">$1.00</div><div class="f" style="left:770px;width:85px;padding-right:8px">$1.00</div><div class="f" style="left:856px;width:85px;padding-right:1px">1</div><div class="f" style="left:942px;width:68px;padding-right:1px">1</div><div class="f" style="left:1011px;width:68px;padding-right:1px">1</div><div class="mk">0</div><div class="btn" style="left:1151px;width:126px">Update Dev/Amps</div><div class="btn" style="left:1281px;width:50px">Info</div></div>
<div class="row" style="top:788px"><span style="left:3px;top:1px;width:59px;text-align:center;font-size:12.7px">3210</span><span style="left:65px">Stairs</span><a style="left:285px">Interior Stairs</a><span style="left:617px">SF</span><div class="f" style="left:685px;width:85px;padding-right:8px">$1.00</div><div class="f" style="left:770px;width:85px;padding-right:8px">$1.00</div><div class="f" style="left:856px;width:85px;padding-right:1px">1</div><div class="f" style="left:942px;width:68px;padding-right:1px">1</div><div class="f" style="left:1011px;width:68px;padding-right:1px">1</div><div class="mk">0</div><div class="btn" style="left:1151px;width:126px">Update Dev/Amps</div><div class="btn" style="left:1281px;width:50px">Info</div></div>
<div class="a navy" style="left:0;top:816px;width:1869px;height:28px"></div>
<div class="btn" style="left:7px;top:820px;width:96px;height:21px;line-height:21px;border-color:#1a2a55;font-size:13.6px"><u>H</u>ome</div>
<div class="t" style="left:129px;top:823px;font-size:14.7px;color:#fff">Perform Action:</div>
<div class="a" style="left:235px;top:820px;width:317px;height:22px;background:#fff;border:1px solid #7f9db9"></div>
<div class="t" style="left:237px;top:824px;font-size:13.8px;color:#222">Set Local Multiplier</div>
<div class="a" style="left:534px;top:822px;width:16px;height:18px;border:1px solid #b7c9f2;border-radius:2px;background:linear-gradient(#dfe8fd,#c1d2fb 60%,#b0c4f5)"><svg class="a" style="left:2.5px;top:5.0px" width="9" height="6" viewBox="0 0 9 6"><path d="M1 1 L4.5 4.5 L8 1" fill="none" stroke="#4d6185" stroke-width="1.8"/></svg></div>
<div class="btn" style="left:559px;top:820px;width:40px;height:21px;line-height:21px;border-color:#1a2a55">Go</div>
</div>
<div class="a" style="left:1903px;top:167px;width:17px;height:844px;background:#f0f0f0"></div>
<svg class="a" style="left:1907px;top:173px" width="9" height="5" viewBox="0 0 9 5"><path d="M0 5L4.5 0.5L9 5Z" fill="#3e5a8c"/></svg>
<div class="a" style="left:1904.5px;top:184.5px;width:14px;height:35px;border:1px solid #7f93bd;border-radius:2px;background:linear-gradient(90deg,#f4f6fb 0,#dfe5f1 40%,#c5cfe3 75%,#b4c0d9 100%);box-shadow:inset 0 0 0 1px rgba(255,255,255,.7)"></div>
<svg class="a" style="left:1908px;top:198px" width="7" height="8" viewBox="0 0 7 8"><path d="M0 0.5H7M0 2.5H7M0 4.5H7M0 6.5H7" stroke="#7f93bd" stroke-width="0.9"/></svg>
<svg class="a" style="left:1907px;top:1000px" width="9" height="5" viewBox="0 0 9 5"><path d="M0 0L4.5 4.5L9 0Z" fill="#3e5a8c"/></svg>
<div id="below" class="a"></div>
<div id="status" class="a"></div>
<div class="t" style="left:8px;top:1033.5px;font-size:11.3px;color:#2b2660">Form View</div>
<div class="a" style="left:957.5px;top:1030px;width:1px;height:19px;background:#9db6dc"></div><div class="a" style="left:958.5px;top:1030px;width:1px;height:19px;background:#f4f8fd"></div>
<div class="t" style="left:1816px;top:1033.5px;font-size:11.3px;color:#2b2660">Num Lock</div>
<div class="a" style="left:1874.5px;top:1029px;width:1px;height:21px;background:#9db6dc"></div><div class="a" style="left:1875.5px;top:1029px;width:1px;height:21px;background:#f4f8fd"></div>
<div class="a" style="left:1881px;top:1030.5px;width:38px;height:18px;border:1px solid #a9c1e4;border-radius:3px;background:linear-gradient(#e3edfb,#c9dbf4)"></div>
<div class="a" style="left:1882px;top:1031.5px;width:18px;height:16px;border-radius:2px;background:linear-gradient(#fde7b5,#fbc768 50%,#f9b74a 50%,#fcd993)"></div>
<svg class="a" style="left:1885px;top:1033.5px" width="13" height="12" viewBox="0 0 13 12"><rect x="0.5" y="0.5" width="12" height="10" fill="#fff" stroke="#444"/><rect x="0.5" y="0.5" width="12" height="2.2" fill="#444"/><path d="M2.5 5H6M2.5 8H6" stroke="#444"/><rect x="7.5" y="4.5" width="3.5" height="1.5" fill="none" stroke="#444" stroke-width="0.7"/><rect x="7.5" y="7.5" width="3.5" height="1.5" fill="none" stroke="#444" stroke-width="0.7"/></svg>
<svg class="a" style="left:1904px;top:1033px" width="13" height="13" viewBox="0 0 13 13"><path d="M1 1V9H9Z" fill="none" stroke="#555" stroke-width="1.1"/><path d="M4 9L11.5 1.5" stroke="#444" stroke-width="1.8"/><rect x="1" y="10.5" width="11" height="2" fill="#555"/></svg>
<div id="task" class="a"></div>
<div class="a" style="left:0;top:1050px;width:97px;height:30px;border-radius:0 12px 12px 0/0 15px 15px 0;background:linear-gradient(#5eac56 0,#3f9a3f 12%,#3a923a 50%,#338633 85%,#2b732b 100%);box-shadow:inset -2px 0 3px rgba(0,40,0,.45),inset 0 2px 2px rgba(255,255,255,.3),2px 0 3px rgba(0,0,60,.4)"></div>
<svg class="a" style="left:10px;top:1056px" width="20" height="19" viewBox="-1 0 17 17"><path d="M1.5 3Q4.5 1 7.5 3L6.5 8Q3.5 6 0.5 8Z" fill="#e5532d"/><path d="M9 3.5Q12 5.5 15.5 3.5L14.5 8.5Q11.5 10.5 8 8.5Z" fill="#7cc242"/><path d="M0.3 9.5Q3.3 7.5 6.3 9.5L5.3 14.5Q2.3 12.5 -0.7 14.5Z" fill="#3f8ae0"/><path d="M7.7 10Q10.7 12 14.2 10L13.2 15Q10.2 17 6.7 15Z" fill="#f6c02c"/></svg>
<div class="t" style="left:34.5px;top:1055px;font-size:19px;font-weight:bold;font-style:italic;color:#fff;text-shadow:1px 1px 1px rgba(0,0,0,.5);letter-spacing:-0.3px">start</div>
<svg class="a" style="left:109px;top:1056px" width="17" height="17" viewBox="0 0 17 17"><text x="2" y="14.5" font-size="18" font-weight="bold" font-style="italic" fill="#3ea0f2" font-family="Liberation Sans,sans-serif">e</text><path d="M1 11Q6 1 16 3" fill="none" stroke="#f0b429" stroke-width="1.5"/></svg>
<svg class="a" style="left:132px;top:1056px" width="15" height="16" viewBox="0 0 15 16"><rect x="1" y="2.5" width="12" height="12" rx="1.5" fill="#dfe9fb" stroke="#1f3f9a"/><circle cx="7" cy="8.5" r="3.6" fill="none" stroke="#2c56c4" stroke-width="1.6"/><path d="M7 8.5L12 2" stroke="#c33" stroke-width="1.5"/></svg>
<svg class="a" style="left:155px;top:1057px" width="16" height="16" viewBox="0 0 16 16"><circle cx="8" cy="8" r="7.2" fill="#e9eef8" stroke="#777"/><circle cx="8" cy="8" r="4.6" fill="#2c56c4"/><path d="M6.5 5.5L11 8L6.5 10.5Z" fill="#fff"/><path d="M2 3Q4 1 7 1" stroke="#e5532d" stroke-width="1.6" fill="none"/><path d="M14 13Q12 15 9 15" stroke="#7cc242" stroke-width="1.6" fill="none"/></svg>
<div class="tb" style="left:182px;top:1054px"><span>Inbox - Microsoft Out...</span></div>
<svg class="a" style="left:190px;top:1057px" width="15" height="15" viewBox="0 0 15 15"><rect x="0.5" y="0.5" width="12" height="12" rx="2" fill="#fbe3b3" stroke="#e08a1e"/><circle cx="8.5" cy="8.5" r="5.8" fill="#fbd27a" stroke="#d08a1e" stroke-width="0.8"/><path d="M5.5 7L8.5 10L11.5 7" fill="none" stroke="#8a5a10" stroke-width="1.3"/></svg>
<div class="tb" style="left:342px;top:1054px"><span>Calendar - Microsoft ...</span></div>
<svg class="a" style="left:350px;top:1057px" width="15" height="15" viewBox="0 0 15 15"><rect x="0.5" y="0.5" width="12" height="12" rx="2" fill="#fbe3b3" stroke="#e08a1e"/><circle cx="8.5" cy="8.5" r="5.8" fill="#fbd27a" stroke="#d08a1e" stroke-width="0.8"/><path d="M5.5 7L8.5 10L11.5 7" fill="none" stroke="#8a5a10" stroke-width="1.3"/></svg>
<div class="tb" style="left:502px;top:1054px"><span>My Documents</span></div>
<svg class="a" style="left:510px;top:1057px" width="16" height="15" viewBox="0 0 16 15"><path d="M1 4H15V14H1Z" fill="#f4dc84" stroke="#a78420"/><rect x="3" y="1" width="10" height="9" fill="#fff" stroke="#888"/><path d="M4.5 3.5H11.5M4.5 5.5H11.5M4.5 7.5H11.5" stroke="#777" stroke-width="0.8"/><path d="M1 8H15V14H1Z" fill="#f7e6a0" stroke="#a78420"/></svg>
<div class="tb" style="left:662px;top:1054px"><span>WinZip Pro - 9 1 2011...</span></div>
<svg class="a" style="left:670px;top:1057px" width="16" height="15" viewBox="0 0 16 15"><rect x="1" y="1" width="12" height="9" fill="#f6d85a" stroke="#9a7a10"/><rect x="3" y="3" width="12" height="9" fill="#f9e48a" stroke="#9a7a10"/><rect x="4.5" y="4.5" width="9" height="6" fill="#fff" stroke="#666" stroke-width="0.7"/><rect x="6" y="12" width="6" height="2" fill="#888"/></svg>
<div class="tb act" style="left:822px;top:1054px"><span>Green PNA Tool</span></div>
<svg class="a" style="left:830px;top:1057px" width="16" height="16" viewBox="0 0 16 16"><rect x="0.5" y="1.5" width="13" height="13" rx="2.5" fill="#f4e3ea" stroke="#a8324e"/><circle cx="9.5" cy="6" r="3.6" fill="none" stroke="#a8324e" stroke-width="2"/><path d="M7 8.5L2.5 14" stroke="#a8324e" stroke-width="2.2"/></svg>
<div class="tb" style="left:982px;top:1054px"><span>Microsoft PowerPoint ...</span></div>
<svg class="a" style="left:990px;top:1057px" width="16" height="15" viewBox="0 0 16 15"><rect x="0.5" y="0.5" width="13" height="13" rx="2.5" fill="#fbe3d6" stroke="#d24a1c"/><circle cx="8.5" cy="8" r="4.3" fill="#fff" stroke="#d24a1c" stroke-width="1.8"/><path d="M8.5 8V3.7M8.5 8H12.8" stroke="#d24a1c" stroke-width="1.2"/></svg>
<div class="tb" style="left:1142px;top:1054px"><span>Document1 - Microsof...</span></div>
<svg class="a" style="left:1150px;top:1057px" width="16" height="15" viewBox="0 0 16 15"><rect x="3.5" y="0.5" width="11" height="14" fill="#fff" stroke="#555"/><path d="M6 4H12.5M6 6.5H12.5M6 9H12.5M6 11.5H12.5" stroke="#888" stroke-width="0.8"/><rect x="0.5" y="3.5" width="8" height="8" fill="#2c56c4" stroke="#1a3a8a"/><text x="1.3" y="10.3" font-size="7.5" font-weight="bold" fill="#fff" font-family="Liberation Sans,sans-serif">W</text></svg>
<svg class="a" style="left:1722px;top:1057px" width="14" height="17" viewBox="0 0 14 17"><path d="M0.5 0.5H12.5V12H9L10 15.5L6 12H0.5Z" fill="#f8f4a0" stroke="#111"/><text x="3.2" y="10.5" font-size="10.5" font-weight="bold" fill="#1a1a8a" font-family="Liberation Sans,sans-serif">?</text></svg>
<svg class="a" style="left:1747px;top:1056px" width="9" height="7" viewBox="0 0 9 7"><rect x="2.5" y="0.5" width="6" height="3.5" fill="none" stroke="#fff"/><rect x="0.5" y="2.5" width="6" height="3.5" fill="#245edb" stroke="#fff"/></svg>
<svg class="a" style="left:1749px;top:1069px" width="5" height="3" viewBox="0 0 5 3"><path d="M0 0H5L2.5 3Z" fill="#fff"/></svg>
<div class="a" style="left:1773.5px;top:1050px;width:146.5px;height:30px;background:linear-gradient(#1ba2f3 0,#1393ea 4px,#0f8ce8 20px,#0c7ad4 30px);box-shadow:inset 1px 0 0 #0a3f9a,inset 2px 0 0 #28b6f6"></div>
<div class="a" style="left:1764.5px;top:1056.5px;width:17px;height:17px;border-radius:50%;background:radial-gradient(circle at 45% 35%,#54b4f8,#1d68e0 70%,#1750c0);border:1px solid #9cc6f4"></div>
<svg class="a" style="left:1769px;top:1060px" width="7" height="10" viewBox="0 0 7 10"><path d="M5.5 1L1.5 5L5.5 9" fill="none" stroke="#fff" stroke-width="1.9"/></svg>
<svg class="a" style="left:1784px;top:1057px" width="15" height="15" viewBox="0 0 15 15"><rect x="0.5" y="0.5" width="12" height="12" rx="2" fill="#fbe3b3" stroke="#e08a1e"/><circle cx="8.5" cy="8.5" r="5.8" fill="#fbd27a" stroke="#d08a1e" stroke-width="0.8"/><path d="M5.5 7L8.5 10L11.5 7" fill="none" stroke="#8a5a10" stroke-width="1.3"/></svg>
<svg class="a" style="left:1802px;top:1056px" width="17" height="17" viewBox="0 0 17 17"><path d="M2.2 8.5A6.3 6.3 0 0 1 12.5 3.6" fill="none" stroke="#0a4a0a" stroke-width="4.2"/><path d="M14.8 8.5A6.3 6.3 0 0 1 4.5 13.4" fill="none" stroke="#0a4a0a" stroke-width="4.2"/><path d="M2.2 8.5A6.3 6.3 0 0 1 12.5 3.6" fill="none" stroke="#22d022" stroke-width="2.8"/><path d="M14.8 8.5A6.3 6.3 0 0 1 4.5 13.4" fill="none" stroke="#22d022" stroke-width="2.8"/><path d="M10.5 0.5L16 4.5L10 7.5Z" fill="#22d022" stroke="#0a4a0a" stroke-width="0.6"/><path d="M6.5 16.5L1 12.5L7 9.5Z" fill="#22d022" stroke="#0a4a0a" stroke-width="0.6"/></svg>
<svg class="a" style="left:1821px;top:1057px" width="16" height="16" viewBox="0 0 16 16"><path d="M4 1L8 3.5L4 6L0 3.5Z M12 1L16 3.5L12 6L8 3.5Z M4 6L8 8.5L4 11L0 8.5Z M12 6L16 8.5L12 11L8 8.5Z" fill="#d7e9fb" stroke="#6aa6e6" stroke-width="0.6"/><circle cx="11.5" cy="11.5" r="3.6" fill="#1e9a2e" stroke="#0c5a14" stroke-width="0.5"/><path d="M9.7 11.5L11 13L13.3 10" fill="none" stroke="#fff" stroke-width="1.1"/></svg>
<svg class="a" style="left:1838px;top:1057px" width="15" height="16" viewBox="0 0 15 16"><rect x="5.5" y="0.5" width="8" height="7" fill="#3c3c78" stroke="#9aa"/><rect x="0.5" y="4.5" width="8" height="7" fill="#2e2e66" stroke="#aab"/><rect x="1" y="12.5" width="8" height="2.5" fill="#cfd4e4"/><rect x="8" y="8.5" width="6" height="2" fill="#cfd4e4"/></svg>
<div class="t" style="left:1862px;top:1060px;font-size:10.9px;color:#fff">11:56 AM</div>
</body></html>
